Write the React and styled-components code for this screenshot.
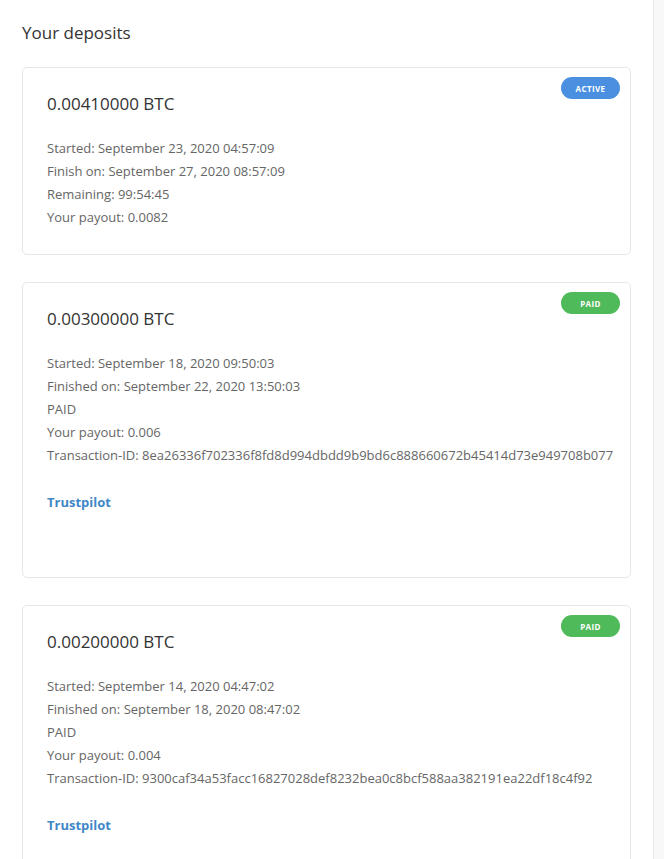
import React from "react";
import styled, { createGlobalStyle } from "styled-components";

const GlobalStyle = createGlobalStyle`
  html, body {
    margin: 0;
    padding: 0;
    background: #ffffff;
    overflow: hidden;
  }
  body {
    font-family: "Open Sans", "Liberation Sans", Arial, sans-serif;
    color: #333;
  }
`;

const Layout = styled.div`
  display: flex;
  width: 664px;
  min-height: 859px;
`;

const Main = styled.main`
  flex: 1;
  padding: 21px 22px 0 22px;
  min-width: 0;
`;

const SideEdge = styled.aside`
  width: 10px;
  flex: none;
  background: #f8f8f8;
  border-left: 1px solid #ebebeb;
`;

const Title = styled.h2`
  margin: 0 0 22px 0;
  font-size: 17px;
  line-height: 24px;
  font-weight: 400;
  color: #333;
`;

const CardList = styled.div`
  display: flex;
  flex-direction: column;
  gap: 27px;
`;

const Card = styled.section`
  position: relative;
  border: 1px solid #e7e7e7;
  border-radius: 5px;
  padding: 23px 24px 25px 24px;
  background: #fff;
`;

const Badge = styled.span`
  position: absolute;
  top: 9px;
  right: 10px;
  width: 59px;
  height: 22px;
  border-radius: 11px;
  background: ${(p) => (p.$status === "active" ? "#4a8fe0" : "#4fba5a")};
  color: #fff;
  font-size: 8px;
  font-weight: 700;
  letter-spacing: 0.4px;
  text-transform: uppercase;
  display: flex;
  align-items: center;
  justify-content: center;
`;

const Amount = styled.div`
  font-size: 17px;
  line-height: 26px;
  color: #333;
  margin-bottom: 20px;
`;

const Details = styled.div`
  display: flex;
  flex-direction: column;
`;

const Line = styled.div`
  font-size: 13px;
  line-height: 23px;
  color: #666;
  white-space: nowrap;
`;

const TrustLink = styled.a`
  display: block;
  margin-top: 24px;
  font-size: 13px;
  line-height: 23px;
  font-weight: 700;
  color: #3f87c7;
  text-decoration: none;
`;

const WidgetSpace = styled.div`
  height: 38px;
`;

const deposits = [
  {
    amount: "0.00410000 BTC",
    status: "active",
    lines: [
      "Started: September 23, 2020 04:57:09",
      "Finish on: September 27, 2020 08:57:09",
      "Remaining: 99:54:45",
      "Your payout: 0.0082",
    ],
  },
  {
    amount: "0.00300000 BTC",
    status: "paid",
    lines: [
      "Started: September 18, 2020 09:50:03",
      "Finished on: September 22, 2020 13:50:03",
      "PAID",
      "Your payout: 0.006",
      "Transaction-ID: 8ea26336f702336f8fd8d994dbdd9b9bd6c888660672b45414d73e949708b077",
    ],
    trust: true,
  },
  {
    amount: "0.00200000 BTC",
    status: "paid",
    lines: [
      "Started: September 14, 2020 04:47:02",
      "Finished on: September 18, 2020 08:47:02",
      "PAID",
      "Your payout: 0.004",
      "Transaction-ID: 9300caf34a53facc16827028def8232bea0c8bcf588aa382191ea22df18c4f92",
    ],
    trust: true,
  },
];

export default function App() {
  return (
    <>
      <GlobalStyle />
      <Layout>
        <Main>
          <Title>Your deposits</Title>
          <CardList>
            {deposits.map((d, i) => (
              <Card key={i}>
                <Badge $status={d.status}>{d.status}</Badge>
                <Amount>{d.amount}</Amount>
                <Details>
                  {d.lines.map((l, j) => (
                    <Line key={j}>{l}</Line>
                  ))}
                </Details>
                {d.trust && (
                  <>
                    <TrustLink href="#">Trustpilot</TrustLink>
                    <WidgetSpace />
                  </>
                )}
              </Card>
            ))}
          </CardList>
        </Main>
        <SideEdge />
      </Layout>
    </>
  );
}
